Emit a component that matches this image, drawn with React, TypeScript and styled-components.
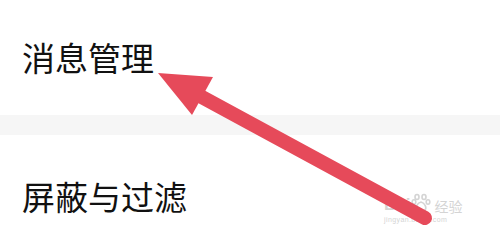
import styled, { createGlobalStyle } from 'styled-components';

const GlobalStyle = createGlobalStyle`
  html, body {
    margin: 0;
    padding: 0;
    background: #ffffff;
  }
`;

const Page = styled.div`
  position: relative;
  width: 500px;
  height: 241px;
  overflow: hidden;
  background: #ffffff;
  display: flex;
  flex-direction: column;
  font-family: 'Noto Sans CJK SC', 'Noto Sans', sans-serif;
`;

const MenuItem = styled.div<{ $height: number }>`
  height: ${({ $height }) => $height}px;
  flex-shrink: 0;
  display: flex;
  align-items: center;
  padding-left: 22px;
  font-size: 33px;
  color: #111111;
  line-height: 1;
`;

const Divider = styled.div`
  height: 20px;
  flex-shrink: 0;
  background: #f6f6f6;
`;

const ArrowLayer = styled.svg`
  position: absolute;
  left: 0;
  top: 0;
  pointer-events: none;
`;

const Watermark = styled.div`
  position: absolute;
  left: 384px;
  top: 193px;
  display: flex;
  flex-direction: column;
  color: #d4d4d4;
  font-family: 'Liberation Sans', Arial, sans-serif;
`;

const MarkRow = styled.div`
  display: flex;
  align-items: flex-end;
  gap: 1px;
`;

const BaiText = styled.span`
  font-size: 17px;
  font-weight: 700;
  line-height: 1;
`;

const JingyanText = styled.span`
  font-family: 'Noto Sans CJK SC', sans-serif;
  font-size: 14px;
  line-height: 1;
  margin-left: 2px;
`;

const UrlText = styled.span`
  font-size: 7px;
  margin-top: 3px;
  letter-spacing: 0.4px;
`;

function Paw() {
  return (
    <svg width="20" height="20" viewBox="0 0 20 20">
      <g fill="none" stroke="#d4d4d4" strokeWidth="1.6">
        <ellipse cx="6" cy="4" rx="2" ry="2.5" />
        <ellipse cx="13" cy="4" rx="2" ry="2.5" />
        <ellipse cx="3" cy="9" rx="1.8" ry="2.2" />
        <ellipse cx="17" cy="9" rx="1.8" ry="2.2" />
        <path d="M10 9 C6 10 4 15 6 17 C8 19 12 19 14 17 C16 15 14 10 10 9 Z" />
      </g>
    </svg>
  );
}

export default function App() {
  return (
    <>
      <GlobalStyle />
      <Page>
        <MenuItem $height={115}>消息管理</MenuItem>
        <Divider />
        <MenuItem $height={122}>屏蔽与过滤</MenuItem>

        <Watermark>
          <MarkRow>
            <BaiText>Bai</BaiText>
            <Paw />
            <JingyanText>经验</JingyanText>
          </MarkRow>
          <UrlText>jingyan.baidu.com</UrlText>
        </Watermark>

        <ArrowLayer width="500" height="241" viewBox="0 0 500 241">
          <line
            x1="200"
            y1="96"
            x2="425"
            y2="218"
            stroke="#e64a5a"
            strokeWidth="14"
            strokeLinecap="round"
          />
          <polygon points="158,73 213,77 192,115" fill="#e64a5a" />
        </ArrowLayer>
      </Page>
    </>
  );
}
